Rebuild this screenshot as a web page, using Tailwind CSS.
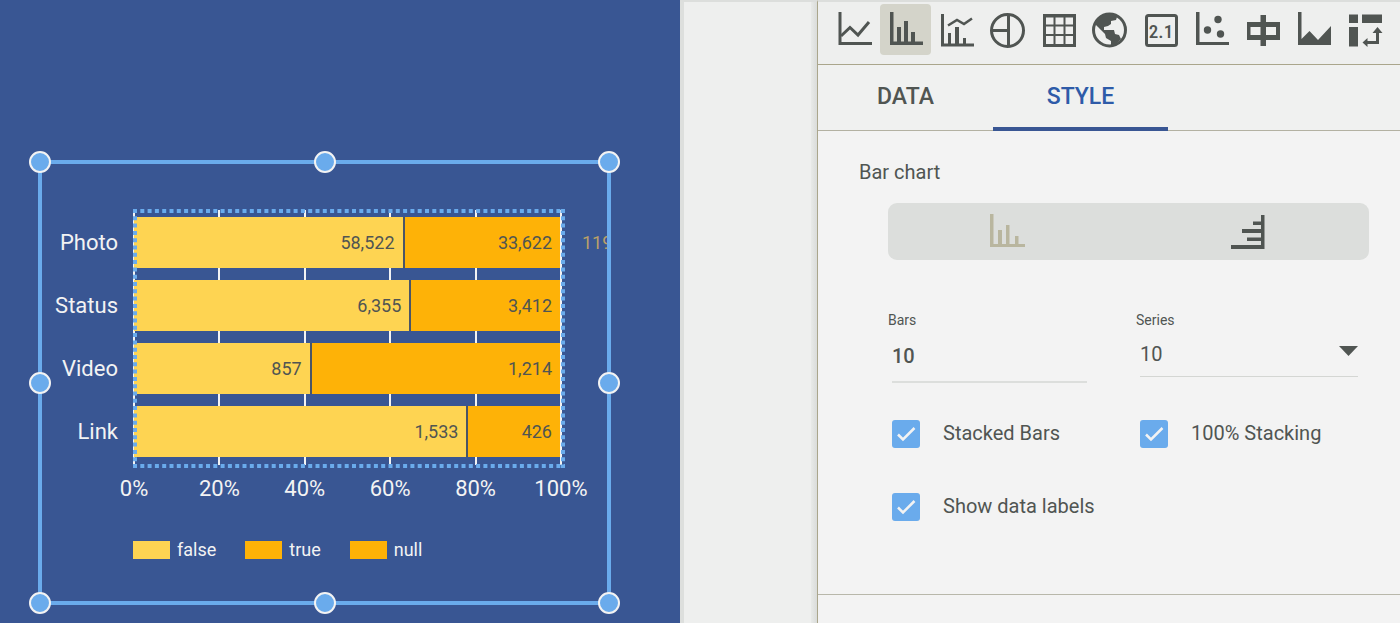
<!DOCTYPE html>
<html lang="en">
<head>
<meta charset="utf-8">
<title>Bar chart style</title>
<script src="https://cdn.jsdelivr.net/npm/@tailwindcss/browser@4"></script>
</head>
<body class="grid min-h-screen grid-cols-[680fr_138fr_582fr] bg-[#f3f3f3] font-[Roboto,sans-serif] text-[#505552]">

<!-- Report canvas -->
<main class="min-w-0 bg-[#395693] pt-40 pr-[69px] pb-4 pl-[38px]">
  <section class="relative border-4 border-[#6aabec] text-[#f3f3f3]" aria-label="Selected chart">
    <div class="overflow-hidden pt-[46px] pr-[46px] pb-[39px]">
      <div class="grid grid-cols-[76px_1fr] gap-x-4">
        <div class="flex flex-col gap-3 pt-[7px] text-right text-[22px]">
          <div class="h-[51px] leading-[51px]">Photo</div>
          <div class="h-[51px] leading-[51px]">Status</div>
          <div class="h-[51px] leading-[51px]">Video</div>
          <div class="h-[51px] leading-[51px]">Link</div>
        </div>
        <div class="relative pt-[7px] pb-2">
          <div class="absolute inset-y-0 -inset-x-px flex justify-between">
            <i class="w-0.5 bg-[#f3f3f3]"></i><i class="w-0.5 bg-[#f3f3f3]"></i><i class="w-0.5 bg-[#f3f3f3]"></i><i class="w-0.5 bg-[#f3f3f3]"></i><i class="w-0.5 bg-[#f3f3f3]"></i><i class="w-0.5 bg-[#f3f3f3]"></i>
          </div>
          <div class="relative mr-px flex flex-col gap-3 text-right text-[18px] leading-[51px] text-[#505552]">
            <div class="relative flex h-[51px]">
              <div class="border-r-2 border-[#4a5566] bg-[#fed452] pr-2" style="width:63.5%">58,522</div>
              <div class="flex-1 bg-[#feb207] pr-2">33,622</div>
              <span class="absolute left-full ml-[22px] text-[#b9a069]">119</span>
            </div>
            <div class="flex h-[51px]">
              <div class="border-r-2 border-[#4a5566] bg-[#fed452] pr-2" style="width:65.1%">6,355</div>
              <div class="flex-1 bg-[#feb207] pr-2">3,412</div>
            </div>
            <div class="flex h-[51px]">
              <div class="border-r-2 border-[#4a5566] bg-[#fed452] pr-2" style="width:41.7%">857</div>
              <div class="flex-1 bg-[#feb207] pr-2">1,214</div>
            </div>
            <div class="flex h-[51px]">
              <div class="border-r-2 border-[#4a5566] bg-[#fed452] pr-2" style="width:78.5%">1,533</div>
              <div class="flex-1 bg-[#feb207] pr-2">426</div>
            </div>
          </div>
          <div class="absolute -top-px -right-1 -bottom-[3px] -left-px">
            <svg class="block h-full w-full" fill="none" stroke="#6aabec" stroke-width="4" stroke-dasharray="4 3.3" aria-hidden="true">
              <line x1="0" y1="2" x2="100%" y2="2"/><line x1="2" y1="0" x2="2" y2="100%"/>
              <svg x="100%" overflow="visible"><line x1="-2" y1="0" x2="-2" y2="100%"/></svg>
              <svg y="100%" overflow="visible"><line x1="0" y1="-2" x2="100%" y2="-2"/></svg>
            </svg>
          </div>
        </div>
        <div class="col-start-2 mt-2.5 flex justify-between text-[22px] leading-7">
          <span class="flex w-0 justify-center">0%</span>
          <span class="flex w-0 justify-center">20%</span>
          <span class="flex w-0 justify-center">40%</span>
          <span class="flex w-0 justify-center">60%</span>
          <span class="flex w-0 justify-center">80%</span>
          <span class="flex w-0 justify-center">100%</span>
        </div>
        <ul class="col-start-2 mt-[35px] -ml-px flex gap-[29px] text-[18px] leading-6">
          <li class="flex items-center gap-[7px]"><i class="h-[18px] w-[37px] bg-[#fed452]"></i>false</li>
          <li class="flex items-center gap-[7px]"><i class="h-[18px] w-[37px] bg-[#feb207]"></i>true</li>
          <li class="flex items-center gap-[7px]"><i class="h-[18px] w-[37px] bg-[#feb207]"></i>null</li>
        </ul>
      </div>
    </div>
    <!-- Resize handles, centred on the selection border -->
    <i class="absolute -top-[13px] -left-[13px] size-[22px] rounded-full border-2 border-[#f3f3f3] bg-[#6aabec]"></i>
    <i class="absolute -top-[13px] left-1/2 -ml-[11px] size-[22px] rounded-full border-2 border-[#f3f3f3] bg-[#6aabec]"></i>
    <i class="absolute -top-[13px] -right-[13px] size-[22px] rounded-full border-2 border-[#f3f3f3] bg-[#6aabec]"></i>
    <i class="absolute top-1/2 -left-[13px] -mt-[11px] size-[22px] rounded-full border-2 border-[#f3f3f3] bg-[#6aabec]"></i>
    <i class="absolute top-1/2 -right-[13px] -mt-[11px] size-[22px] rounded-full border-2 border-[#f3f3f3] bg-[#6aabec]"></i>
    <i class="absolute -bottom-[13px] -left-[13px] size-[22px] rounded-full border-2 border-[#f3f3f3] bg-[#6aabec]"></i>
    <i class="absolute -bottom-[13px] left-1/2 -ml-[11px] size-[22px] rounded-full border-2 border-[#f3f3f3] bg-[#6aabec]"></i>
    <i class="absolute -right-[13px] -bottom-[13px] size-[22px] rounded-full border-2 border-[#f3f3f3] bg-[#6aabec]"></i>
  </section>
</main>

<!-- Space between the page and the panel -->
<div class="border-t-2 border-r border-l-4 border-t-[#dcdedc] border-r-[#aaa68c] border-l-[#dddfdd] bg-[#eeefee]"><div class="ml-auto h-full w-1.5 bg-linear-to-r from-[#e8eae8] to-[#dadcda]"></div></div>

<!-- Properties panel -->
<aside class="flex min-w-0 flex-col">
  <div class="flex border-t-2 border-b border-t-[#dcdedc] border-b-[#aaa68c] bg-[#eeefee] pt-0.5 pb-[9px] pl-[11px]" role="toolbar" aria-label="Chart type">
    <button class="grid h-[51px] w-[51px] shrink-0 place-items-center rounded" aria-label="Time series"><svg class="size-9" viewBox="0 0 36 36" fill="none" stroke="currentColor" stroke-width="3"><path d="M3 0v31.500H35"/><path d="M4 24 13 15.500 21 23 32 10"/></svg></button>
    <button class="grid h-[51px] w-[51px] shrink-0 place-items-center rounded bg-[#d4d4ca]" aria-label="Bar chart" aria-pressed="true"><svg class="size-9" viewBox="0 0 36 36" fill="currentColor"><path d="M2 0h3.500v29.500H9V15h4v14.500h3V9h4v20.500h3V20h4v9.500h8V33H2z"/></svg></button>
    <button class="grid h-[51px] w-[51px] shrink-0 place-items-center rounded" aria-label="Combo chart"><svg class="size-9" viewBox="0 0 36 36" fill="currentColor"><path d="M2 2h3v29.500h4V21h3v10.500h4V15h4v16.500h4V26h3v5.500h8v3H2z"/><path d="M9 13.500 18 8l7 4 8-5.500" fill="none" stroke="currentColor" stroke-width="2.500"/></svg></button>
    <button class="grid h-[51px] w-[51px] shrink-0 place-items-center rounded" aria-label="Pie chart"><svg class="size-9" viewBox="0 0 36 36" fill="none" stroke="currentColor" stroke-width="3"><circle cx="17.500" cy="18.500" r="16"/><path d="M18.500 3v31M2 18.500h16"/></svg></button>
    <button class="grid h-[51px] w-[51px] shrink-0 place-items-center rounded" aria-label="Table"><svg class="size-9" viewBox="0 0 36 36" fill="none" stroke="currentColor"><path stroke-width="3" d="M3.500 3.500h30v30h-30z"/><path stroke-width="2" d="M3 4.500h31M13.500 4v29M23.500 4v29M3 13.500h31M3 23h31"/></svg></button>
    <button class="grid h-[51px] w-[51px] shrink-0 place-items-center rounded" aria-label="Geo map"><svg class="size-9" viewBox="0 0 36 36" fill="currentColor"><circle cx="17.500" cy="18" r="16" fill="none" stroke="currentColor" stroke-width="3"/><path d="M3 12 8 4l9-3 6 2 2 2-1 3-5 1v3l-3 2-4 1v3h10l1 4 4 1 2 4-6 6-4 1v-5l-5-3-1-4-4-4-3-3z"/></svg></button>
    <button class="grid h-[51px] w-[51px] shrink-0 place-items-center rounded" aria-label="Scorecard"><svg class="size-9" viewBox="0 0 36 36" fill="currentColor"><rect x="3.500" y="3.500" width="30" height="30" rx="2" fill="none" stroke="currentColor" stroke-width="3"/><text x="18" y="25.500" text-anchor="middle" class="font-['Roboto_Condensed','Liberation_Sans_Narrow',Roboto,sans-serif] text-[19px] font-medium">2.1</text></svg></button>
    <button class="grid h-[51px] w-[51px] shrink-0 place-items-center rounded" aria-label="Scatter chart"><svg class="size-9" viewBox="0 0 36 36" fill="currentColor"><path d="M2 0h3.500v30H35v3H2z"/><circle cx="24" cy="7.500" r="3.700"/><circle cx="13.500" cy="18" r="3.700"/><circle cx="26.500" cy="22" r="3.700"/></svg></button>
    <button class="grid h-[51px] w-[51px] shrink-0 place-items-center rounded" aria-label="Bullet chart"><svg class="size-9" viewBox="0 0 36 36" fill="currentColor"><path fill-rule="evenodd" d="M2 10h13.500V3H21v7h14v18H21v6h-5.500v-6H2zM5.500 15v8h10v-8zM21 15v8h10v-8z"/></svg></button>
    <button class="grid h-[51px] w-[51px] shrink-0 place-items-center rounded" aria-label="Area chart"><svg class="size-9" viewBox="0 0 36 36" fill="currentColor"><path d="M2 0h3.500v27l8-8 8.500 9 13-14v19H2z"/></svg></button>
    <button class="grid h-[51px] w-[51px] shrink-0 place-items-center rounded" aria-label="Pivot table"><svg class="size-9" viewBox="0 0 36 36" fill="currentColor"><path d="M2 2.500h9V11H2zM15 2.500h20V11H15zM2 15h9v19.500H2zM30.500 15l5 6H32v11H20.500v3l-5-4.500 5-4.500v3H29V21h-3.500z"/></svg></button>
  </div>

  <div class="flex border-b border-[#b3b1a2] bg-[#f0f1f0] text-[23px] font-medium" role="tablist">
    <button class="h-[65px] w-[175px]" role="tab" aria-selected="false">DATA</button>
    <button class="-mb-px h-[66px] w-[175px] border-b-4 border-[#395693] pt-0.5 text-[#2e5ba8]" role="tab" aria-selected="true">STYLE</button>
  </div>

  <form class="border-b border-[#b8b7aa] pt-[27px] pr-4 pb-[73px] pl-[70px]">
    <h2 class="-ml-[29px] text-[20px] leading-7">Bar chart</h2>
    <div class="mt-[17px] mr-[15px] grid h-[57px] grid-cols-2 rounded-[9px] bg-[#dcdedc]" role="group" aria-label="Orientation">
      <button type="button" class="grid place-items-center text-[#b9b69f]" aria-label="Vertical bars"><svg class="size-9" viewBox="0 0 36 36" fill="currentColor"><path d="M0 0h3.500v30H8V16h4v14h4V11h3.500v19H25v-8h3.500v8H35v3H0z"/></svg></button>
      <button type="button" class="grid place-items-center" aria-label="Horizontal bars" aria-pressed="true"><svg class="size-9" viewBox="0 0 36 36" fill="currentColor"><path d="M30 1h3.500v34H0v-4h30v-4H16v-3.500h14V19H11v-4h19v-4h-8V7.500h8z"/></svg></button>
    </div>

    <div class="mt-[50px] grid grid-cols-2">
      <div>
        <label for="bars" class="block text-[14px] leading-5">Bars</label>
        <input id="bars" type="text" value="10" class="ml-1 block h-[53px] w-[195px] border-b-2 border-[#dcdedc] bg-transparent text-[20px] font-medium outline-none">
      </div>
      <div>
        <label for="series" class="block text-[14px] leading-5">Series</label>
        <div class="relative mr-[26px] ml-1">
          <select id="series" class="block h-[47px] w-full appearance-none border-b border-[#d4d6d3] bg-transparent pt-0.5 text-[20px] outline-none"><option>10</option></select>
          <svg class="pointer-events-none absolute top-4 right-0 h-2.5 w-[19px]" viewBox="0 0 19 10" fill="currentColor" aria-hidden="true"><path d="M0 0h19l-9.500 10z"/></svg>
        </div>
      </div>
    </div>

    <div class="mt-[37px] ml-1 grid grid-cols-[248fr_244fr] gap-y-[45px] text-[20px] leading-[26px]">
      <label class="flex h-7 items-start gap-[23px]"><span class="relative size-7"><input type="checkbox" checked class="block size-7 appearance-none rounded-[3px] bg-[#6aabec]"><svg class="pointer-events-none absolute inset-0 size-7" viewBox="0 0 28 28" fill="none" stroke="#f3f3f3" stroke-width="2.500"><path d="M6 14.500 11 19.500 22.500 8"/></svg></span>Stacked Bars</label>
      <label class="flex h-7 items-start gap-[23px]"><span class="relative size-7"><input type="checkbox" checked class="block size-7 appearance-none rounded-[3px] bg-[#6aabec]"><svg class="pointer-events-none absolute inset-0 size-7" viewBox="0 0 28 28" fill="none" stroke="#f3f3f3" stroke-width="2.500"><path d="M6 14.500 11 19.500 22.500 8"/></svg></span>100% Stacking</label>
      <label class="flex h-7 items-start gap-[23px]"><span class="relative size-7"><input type="checkbox" checked class="block size-7 appearance-none rounded-[3px] bg-[#6aabec]"><svg class="pointer-events-none absolute inset-0 size-7" viewBox="0 0 28 28" fill="none" stroke="#f3f3f3" stroke-width="2.500"><path d="M6 14.500 11 19.500 22.500 8"/></svg></span>Show data labels</label>
    </div>
  </form>
</aside>
</body>
</html>
